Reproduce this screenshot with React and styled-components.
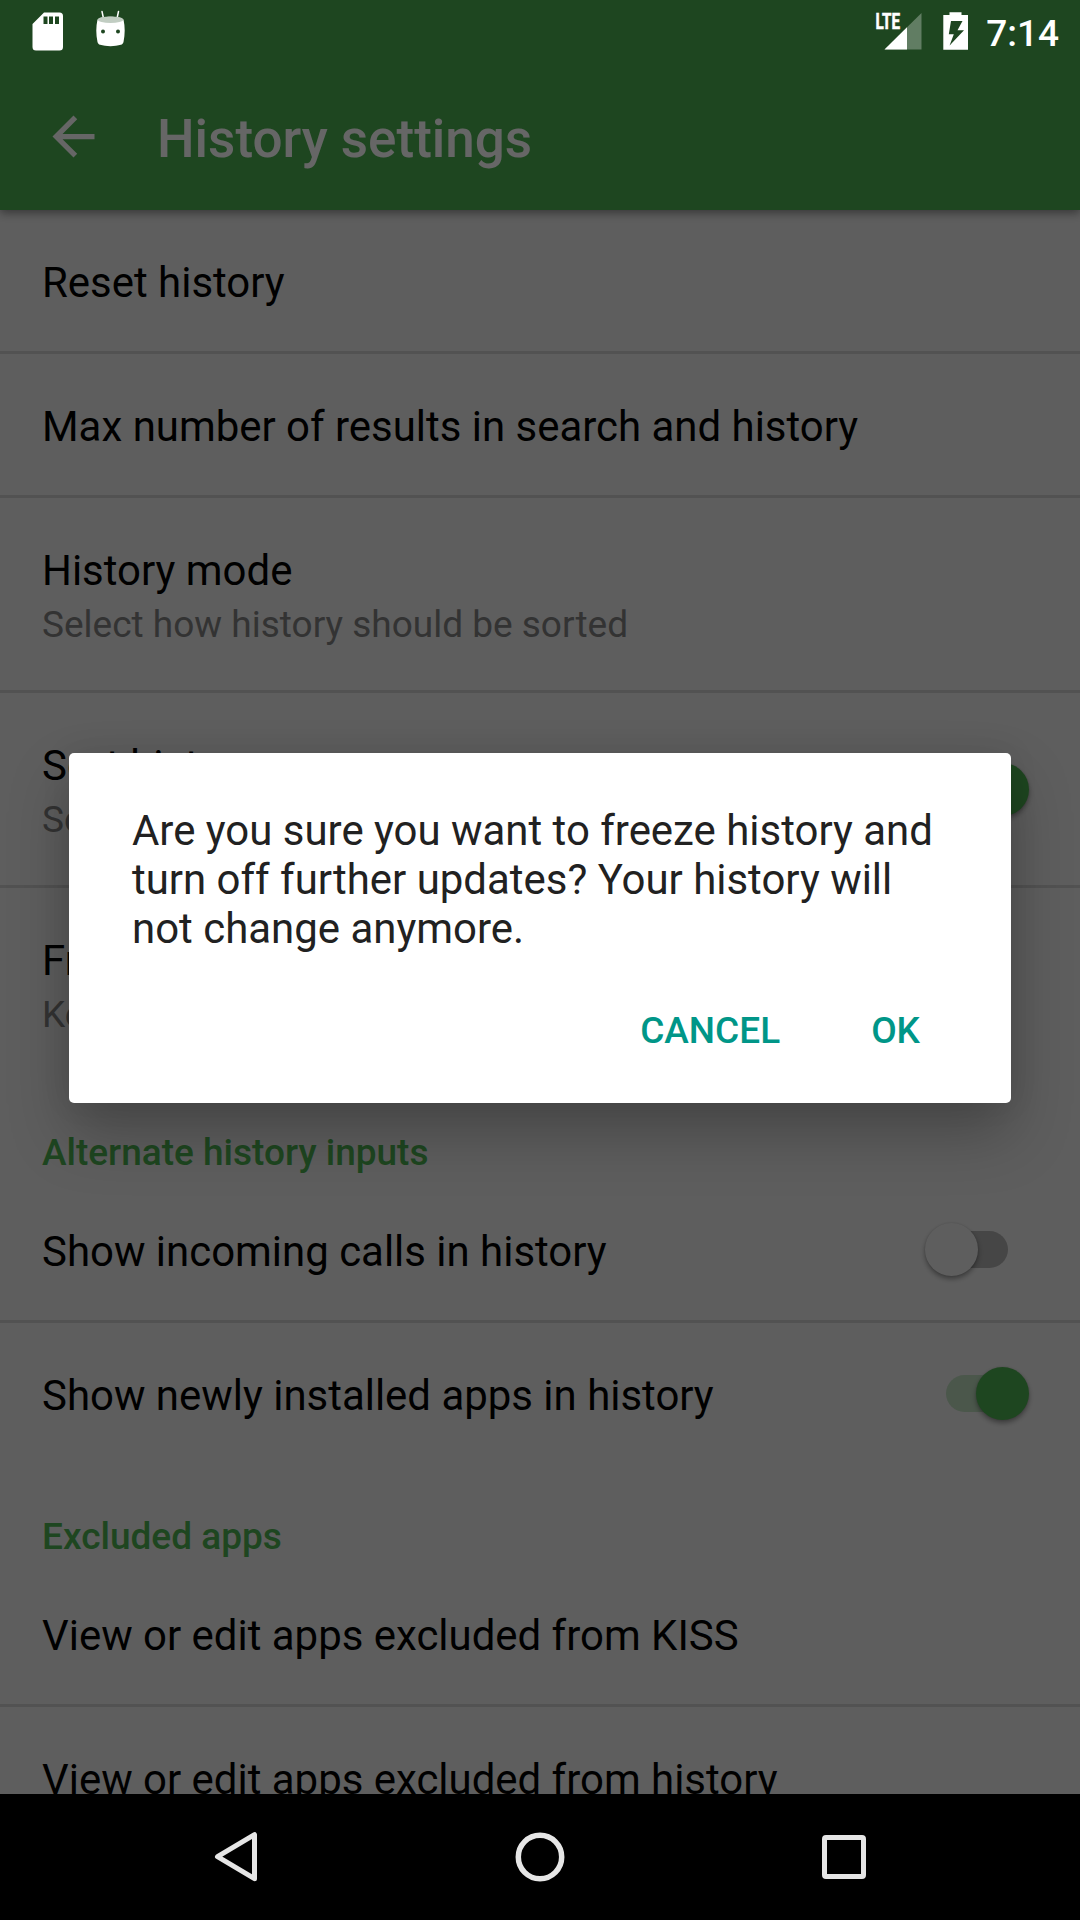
import React from "react";
import styled, { createGlobalStyle } from "styled-components";

const GlobalStyle = createGlobalStyle`
  *, *::before, *::after { box-sizing: border-box; }
  html, body { margin: 0; padding: 0; background: #000; overflow: hidden; }
  body { font-family: Roboto, "Noto Sans", sans-serif; }
  h1, h2, p, ul { margin: 0; padding: 0; font: inherit; }
  svg { display: block; flex: none; }
`;

const Screen = styled.div`
  position: relative;
  width: 1080px;
  height: 1920px;
  display: flex;
  flex-direction: column;
  overflow: hidden;
  background: #ebebeb;
`;

const Header = styled.header`
  position: relative;
  z-index: 1;
  flex: none;
  height: 210px;
  padding-top: 63px;
  background: #4caf50;
  box-shadow: 0 3px 9px rgba(0, 0, 0, 0.42);
`;

const Toolbar = styled.div`
  height: 147px;
  padding-left: 42px;
  display: flex;
  align-items: center;
  gap: 52px;
  color: #fff;
`;

const Title = styled.h1`
  padding-top: 4px;
  font-size: 53px;
  font-weight: 500;
  line-height: 62px;
  white-space: nowrap;
`;

const Content = styled.main`
  flex: 1;
  min-height: 0;
  overflow: hidden;
`;

const Row = styled.div`
  display: flex;
  justify-content: space-between;
  align-items: center;
  height: ${(p) => (p.$tall ? 192 : 141)}px;
  padding: 0 51px 0 42px;
`;

const Divider = styled.div`
  height: 3px;
  background: rgba(0, 0, 0, 0.13);
`;

const RowText = styled.div`
  align-self: flex-start;
  padding-top: 48px;
  white-space: nowrap;
`;

const RowTitle = styled.div`
  font-size: 41.950px;
  line-height: 49px;
  color: #000;
`;

const Summary = styled.div`
  margin-top: 8px;
  font-size: 37px;
  line-height: 43px;
  color: #808080;
`;

const Category = styled.h2`
  height: 99px;
  padding: 51px 42px 0;
  font-size: 37px;
  font-weight: 500;
  line-height: 43px;
  color: #4caf50;
`;

const SwitchBox = styled.div`
  width: 104px;
  height: 53px;
  display: flex;
  align-items: center;
  justify-content: ${(p) => (p.$on ? "flex-end" : "flex-start")};
  position: relative;
`;

const Track = styled.span`
  position: absolute;
  left: 21px;
  top: 8px;
  width: 62px;
  height: 37px;
  border-radius: 19px;
  background: ${(p) => (p.$on ? "rgba(76, 175, 80, 0.3)" : "rgba(0, 0, 0, 0.26)")};
`;

const Thumb = styled.span`
  position: relative;
  width: 53px;
  height: 53px;
  border-radius: 50%;
  background: ${(p) => (p.$on ? "#4caf50" : "#ececec")};
  box-shadow: 0 3px 5px rgba(0, 0, 0, 0.36), 0 0 2px rgba(0, 0, 0, 0.12);
`;

const NavBar = styled.nav`
  position: relative;
  z-index: 4;
  flex: none;
  height: 126px;
  display: flex;
  justify-content: center;
  align-items: center;
  background: #000;
`;

const NavButton = styled.div`
  width: ${(p) => p.$width}px;
  display: flex;
  justify-content: center;
`;

const Scrim = styled.div`
  position: absolute;
  inset: 0;
  z-index: 2;
  background: rgba(0, 0, 0, 0.6);
  display: flex;
  justify-content: center;
  align-items: flex-start;
  padding-top: 753px;
`;

const Dialog = styled.section`
  width: 942px;
  height: 350px;
  padding: 53px 63px 0;
  border-radius: 5px;
  background: #fff;
  box-shadow: 0 30px 60px rgba(0, 0, 0, 0.25), 0 0 30px rgba(0, 0, 0, 0.08);
`;

const Message = styled.p`
  font-size: 41.950px;
  line-height: 49px;
  color: #212121;
  white-space: pre-line;
`;

const Actions = styled.div`
  display: flex;
  justify-content: flex-end;
  gap: 91px;
  padding: 56px 28px 0 0;
`;

const Action = styled.button`
  border: 0;
  padding: 0;
  background: none;
  font-family: inherit;
  font-size: 37px;
  font-weight: 500;
  line-height: 43px;
  color: #009688;
`;

const StatusBar = styled.div`
  position: absolute;
  inset: 0 0 auto 0;
  z-index: 3;
  height: 63px;
  padding: 0 21px 0 32px;
  display: flex;
  justify-content: space-between;
  color: #fff;
`;

const StatusGroup = styled.div`
  display: flex;
  gap: ${(p) => p.$gap}px;
`;

const Clock = styled.span`
  padding-top: 12px;
  margin-left: -3px;
  font-size: 37px;
  font-weight: 500;
  line-height: 43px;
`;

const SdIcon = () => (
  <svg width="31" height="63" viewBox="0 0 31 63">
    <path
      fill="#fff"
      fillRule="evenodd"
      d="M12 12.5h15.500a3.500 3.500 0 0 1 3.500 3.500v31a3.500 3.500 0 0 1-3.500 3.500h-23.500a3.500 3.500 0 0 1-3.500-3.500V24zM11.500 16.500v7.500h4v-7.500zM17 16.500v7.500h4v-7.500zM23 16.500v7.500h4v-7.500z"
    />
  </svg>
);

const DroidIcon = () => (
  <svg width="32" height="63" viewBox="0 0 32 63">
    <path d="M7 11.500l1.500 7M23.500 11.500l-1.500 7" stroke="#fff" strokeWidth="1.500" strokeLinecap="round" />
    <path
      d="M2.500 19.500C6.500 15.700 24.500 15.700 28.500 19.500c1.600 7 1.600 15 0 22.500-.4 1.600-1.200 2.400-2.600 2.800-6 1.900-14.800 1.900-20.800 0C3.700 44.400 2.900 43.600 2.500 42c-1.600-7.500-1.600-15.500 0-22.500z"
      fill="#fff"
    />
    <ellipse cx="15.500" cy="19.700" rx="12.700" ry="3.300" fill="#c1cdc2" />
    <circle cx="8" cy="31.500" r="2" fill="#1e4620" />
    <circle cx="23" cy="31.500" r="2" fill="#1e4620" />
  </svg>
);

const SignalIcon = () => (
  <svg width="47" height="63" viewBox="0 0 47 63">
    <path d="M46.500 13v36.500H9.500z" fill="#fff" fillOpacity="0.3" />
    <path d="M32 27.300v22.200H9.500z" fill="#fff" />
    <text
      x="0.500"
      y="28.800"
      fill="#fff"
      stroke="#fff"
      strokeWidth="0.600"
      fontFamily="Roboto, sans-serif"
      fontSize="21.500"
      fontWeight="700"
      textLength="24.500"
      lengthAdjust="spacingAndGlyphs"
    >
      LTE
    </text>
  </svg>
);

const BatteryIcon = () => (
  <svg width="25" height="63" viewBox="0 0 25 63">
    <path
      fill="#fff"
      fillRule="evenodd"
      d="M6.500 12.300h12v2.700H25v34.700H.300V15h6.200zM8 21L5.800 34.300h5L6.600 45.500 21 30.300h-6.500l5-9.300z"
    />
  </svg>
);

const BackArrow = () => (
  <svg width="63" height="63" viewBox="0 0 24 24">
    <path fill="#fff" d="M20 11H7.830l5.590-5.590L12 4l-8 8 8 8 1.410-1.410L7.830 13H20v-2z" />
  </svg>
);

function Switch({ on }) {
  return (
    <SwitchBox $on={on}>
      <Track $on={on} />
      <Thumb $on={on} />
    </SwitchBox>
  );
}

function Preference({ title, summary, toggle, last }) {
  return (
    <>
      <Row $tall={!!summary}>
        <RowText>
          <RowTitle>{title}</RowTitle>
          {summary && <Summary>{summary}</Summary>}
        </RowText>
        {toggle && <Switch on={toggle === "on"} />}
      </Row>
      {!last && <Divider />}
    </>
  );
}

export default function App() {
  return (
    <>
      <GlobalStyle />
      <Screen>
        <Header>
          <Toolbar>
            <BackArrow />
            <Title>History settings</Title>
          </Toolbar>
        </Header>

        <Content>
          <Preference title="Reset history" />
          <Preference title="Max number of results in search and history" />
          <Preference title="History mode" summary="Select how history should be sorted" />
          <Preference title="Sort history" summary="Sort history by name" toggle="on" />
          <Preference title="Freeze history" summary="Keep history frozen" last />
          <Category>Alternate history inputs</Category>
          <Preference title="Show incoming calls in history" toggle="off" />
          <Preference title="Show newly installed apps in history" toggle="on" last />
          <Category>Excluded apps</Category>
          <Preference title="View or edit apps excluded from KISS" />
          <Preference title="View or edit apps excluded from history" last />
        </Content>

        <NavBar>
          <NavButton $width={304}>
            <svg width="44" height="52" viewBox="0 0 44 52">
              <path d="M40.500 3.700v44L3.500 25.700z" fill="none" stroke="#e6e6e6" strokeWidth="5" strokeLinejoin="round" />
            </svg>
          </NavButton>
          <NavButton $width={304}>
            <svg width="50" height="50" viewBox="0 0 50 50">
              <circle cx="25" cy="25" r="21.700" fill="none" stroke="#e6e6e6" strokeWidth="5.500" />
            </svg>
          </NavButton>
          <NavButton $width={304}>
            <svg width="44" height="44" viewBox="0 0 44 44">
              <rect x="2.500" y="2.500" width="39" height="39" rx="1.500" fill="none" stroke="#e6e6e6" strokeWidth="5" />
            </svg>
          </NavButton>
        </NavBar>

        <Scrim>
          <Dialog>
            <Message>
              {"Are you sure you want to freeze history and\nturn off further updates? Your history will\nnot change anymore."}
            </Message>
            <Actions>
              <Action>CANCEL</Action>
              <Action>OK</Action>
            </Actions>
          </Dialog>
        </Scrim>

        <StatusBar>
          <StatusGroup $gap={32}>
            <SdIcon />
            <DroidIcon />
          </StatusGroup>
          <StatusGroup $gap={21}>
            <SignalIcon />
            <BatteryIcon />
            <Clock>7:14</Clock>
          </StatusGroup>
        </StatusBar>
      </Screen>
    </>
  );
}
